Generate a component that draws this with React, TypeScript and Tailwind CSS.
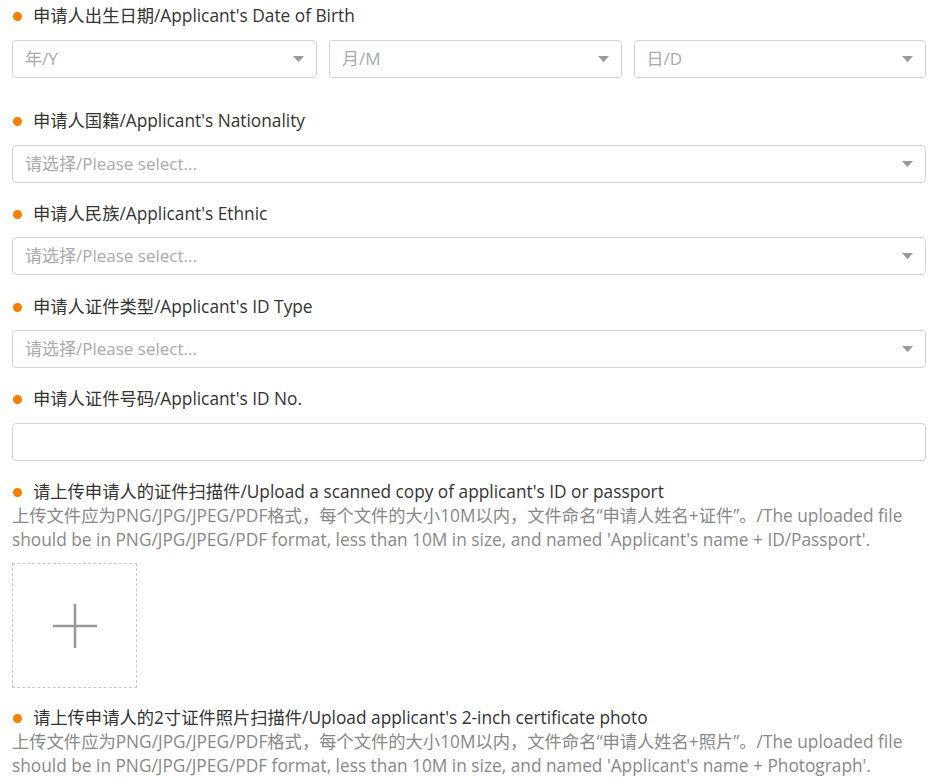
import React from "react";

const font = { fontFamily: '"Open Sans", "Noto Sans CJK SC", sans-serif' };

function Label({ text }: { text: string }) {
  return (
    <div className="flex items-center h-6 text-[17.3px] text-[#333]">
      <span className="w-[9px] h-[9px] rounded-full bg-[#f77f00] ml-[1px] mr-[11px] shrink-0" />
      <span>{text}</span>
    </div>
  );
}

function Caret() {
  return (
    <svg width="11" height="6" viewBox="0 0 11 6" className="shrink-0">
      <path d="M0 0 L11 0 L5.5 6 Z" fill="#999" />
    </svg>
  );
}

function Select({ placeholder, className = "" }: { placeholder: string; className?: string }) {
  return (
    <div
      className={`h-[38px] border border-[#d4d4d4] rounded-[4px] flex items-center justify-between pl-[12px] pr-[12px] bg-white ${className}`}
    >
      <span className="text-[17px] text-[#aaa]">{placeholder}</span>
      <Caret />
    </div>
  );
}

function Upload() {
  return (
    <div className="w-[125px] h-[125px] border border-dashed border-[#c8c8c8] flex items-center justify-center">
      <svg width="46" height="46" viewBox="0 0 46 46">
        <path d="M23 1 V45 M1 23 H45" stroke="#999" strokeWidth="2.5" />
      </svg>
    </div>
  );
}

export default function App() {
  return (
    <div className="w-[934px] h-[784px] overflow-hidden bg-white pl-3 pr-2 pt-1" style={font}>
      <Label text="申请人出生日期/Applicant's Date of Birth" />
      <div className="grid grid-cols-[305px_1fr_1fr] gap-3 mt-3">
        <Select placeholder="年/Y" />
        <Select placeholder="月/M" />
        <Select placeholder="日/D" />
      </div>

      <div className="mt-[31px]">
        <Label text="申请人国籍/Applicant's Nationality" />
        <Select placeholder="请选择/Please select..." className="mt-3" />
      </div>

      <div className="mt-[19px]">
        <Label text="申请人民族/Applicant's Ethnic" />
        <Select placeholder="请选择/Please select..." className="mt-[11px]" />
      </div>

      <div className="mt-5">
        <Label text="申请人证件类型/Applicant's ID Type" />
        <Select placeholder="请选择/Please select..." className="mt-[11px]" />
      </div>

      <div className="mt-[19px]">
        <Label text="申请人证件号码/Applicant's ID No." />
        <div className="mt-3 h-[38px] border border-[#d4d4d4] rounded-[4px]" />
      </div>

      <div className="mt-[19px]">
        <Label text="请上传申请人的证件扫描件/Upload a scanned copy of applicant's ID or passport" />
        <p className="text-[17.3px] leading-6 text-[#888]">
          上传文件应为PNG/JPG/JPEG/PDF格式，每个文件的大小10M以内，文件命名“申请人姓名+证件”。/The uploaded file should be in PNG/JPG/JPEG/PDF format, less than 10M in size, and named 'Applicant's name + ID/Passport'.
        </p>
        <div className="mt-[11px]">
          <Upload />
        </div>
      </div>

      <div className="mt-[18px]">
        <Label text="请上传申请人的2寸证件照片扫描件/Upload applicant's 2-inch certificate photo" />
        <p className="text-[17.3px] leading-6 text-[#888]">
          上传文件应为PNG/JPG/JPEG/PDF格式，每个文件的大小10M以内，文件命名“申请人姓名+照片”。/The uploaded file should be in PNG/JPG/JPEG/PDF format, less than 10M in size, and named 'Applicant's name + Photograph'.
        </p>
      </div>
    </div>
  );
}
